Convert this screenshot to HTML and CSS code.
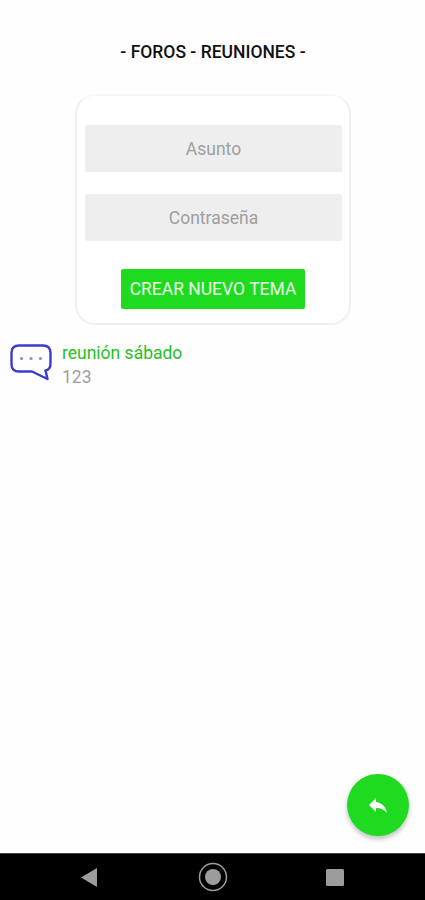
FILE: index.html
```
<!DOCTYPE html>
<html lang="es">
<head>
  <meta charset="UTF-8">
  <meta name="viewport" content="width=device-width, initial-scale=1.0">
  <title>Foros - Reuniones</title>
  <link rel="stylesheet" href="styles.css">
</head>
<body>

  <main class="content">
    <h1 class="title">- FOROS - REUNIONES -</h1>

    <form class="topic-form">
      <input type="text" name="asunto" placeholder="Asunto">
      <input type="password" name="clave" placeholder="Contraseña">
      <button type="button" class="create">CREAR NUEVO TEMA</button>
    </form>

    <div class="topic">
      <svg class="topic-icon" width="42" height="38" viewBox="0 0 42 38">
        <path d="M9 1.500H33Q40.500 1.500 40.500 9V19.500Q40.500 25.500 35.500 26.500L37.500 35L22 27.500H9Q1.500 27.500 1.500 20V9Q1.500 1.500 9 1.500Z" fill="none" stroke="#3a3ccb" stroke-width="2.400" stroke-linejoin="round"/>
        <g fill="#8d8dd0">
          <circle cx="11.500" cy="14.500" r="1.600"/>
          <circle cx="21" cy="14.500" r="1.600"/>
          <circle cx="30.500" cy="14.500" r="1.600"/>
        </g>
      </svg>
      <div class="topic-text">
        <div class="topic-name">reunión sábado</div>
        <div class="topic-count">123</div>
      </div>
    </div>
  </main>

  <button type="button" class="back" aria-label="Volver">
    <svg width="24" height="24" viewBox="0 0 24 24">
      <path d="M10 9V5l-7 7 7 7v-4.100c5 0 8.500 1.600 11 5.100-1-5-4-10-11-11z" fill="#fff"/>
    </svg>
  </button>

  <nav class="navbar">
    <svg width="16" height="19" viewBox="0 0 16 19"><path d="M0 9.500L16 0V19Z" fill="#9c9c9c"/></svg>
    <svg class="home" width="30" height="30" viewBox="0 0 30 30">
      <circle cx="15" cy="15" r="13.500" fill="none" stroke="#9c9c9c" stroke-width="1.500"/>
      <circle cx="15" cy="15" r="8" fill="#9c9c9c"/>
    </svg>
    <svg width="18" height="17" viewBox="0 0 18 17"><rect width="18" height="17" rx="1.500" fill="#9c9c9c"/></svg>
  </nav>

</body>
</html>
```
FILE: styles.css
```
* { box-sizing: border-box; }
body { display: flex; flex-direction: column; height: 100vh; margin: 0; background: #fefefe; font-family: Roboto, sans-serif; font-size: 17.5px; overflow: hidden; }

.content { flex: 1; }
.title { margin: 41px 0 0; padding-left: 1px; font-size: 17.5px; line-height: 22px; font-weight: 500; text-align: center; color: #111; }

.topic-form { display: flex; flex-direction: column; align-items: center; width: 276px; height: 231px; margin: 31px auto 0 75px; padding: 29px 8px 0; border: 2px solid #f0f0f0; border-top-color: #f7f7f7; border-radius: 20px; background: #fff; }
.topic-form input { width: 257px; height: 47px; margin: 0 0 22px; padding: 0 0 0 1px; border: none; border-radius: 2px; background: #eee; font: inherit; text-align: center; color: #333; }
.topic-form input::placeholder { color: #9e9e9e; opacity: 1; }
.create { width: 184px; height: 40px; margin-top: 6px; padding: 0; border: none; border-radius: 2px; background: #1fdb1f; font: inherit; color: #e9fde9; white-space: nowrap; }

.topic { display: flex; gap: 10px; margin-top: 16px; padding-left: 10px; }
.topic-icon { margin-top: 3px; }
.topic-text { line-height: 24px; }
.topic-name { color: #27c027; }
.topic-count { color: #9e9e9e; }

.back { position: fixed; right: 16px; bottom: 64px; display: flex; align-items: center; justify-content: center; width: 62px; height: 62px; padding: 0; border: none; border-radius: 50%; background: #1fdb1f; box-shadow: 0 3px 5px rgba(0, 0, 0, 0.25); }

.navbar { display: flex; align-items: center; justify-content: space-between; height: 47px; border-top: 1px solid #444; padding: 0 81px; background: #000; }
.home { margin-left: 2px; }
```
